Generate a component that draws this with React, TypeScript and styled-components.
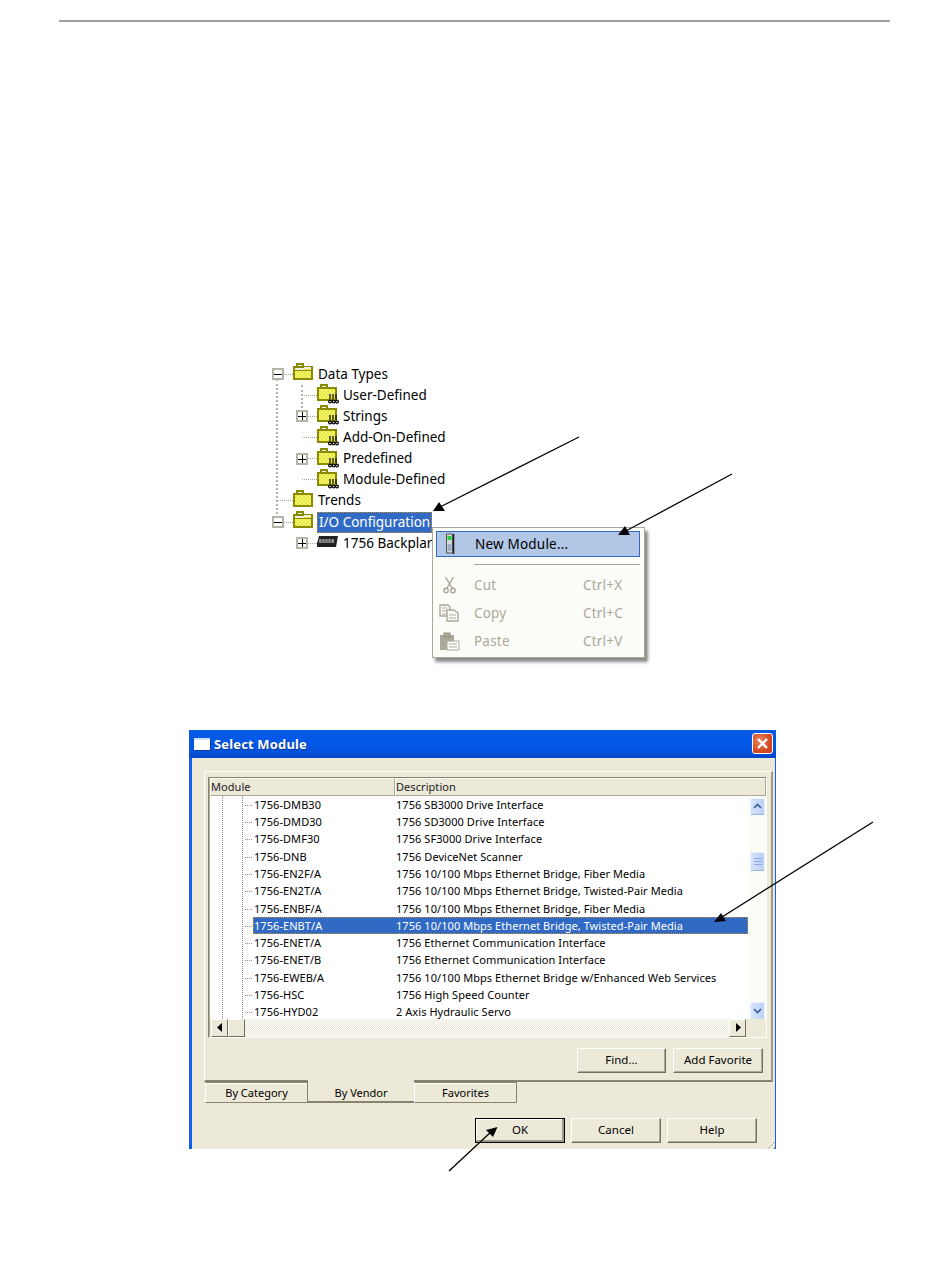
import React from "react";
import styled, { createGlobalStyle } from "styled-components";

const Global = createGlobalStyle`
  html, body { margin: 0; padding: 0; background: #fff; }
  #root { width: 950px; height: 1267px; }
`;

const FONT = `"Noto Sans", "DejaVu Sans", sans-serif`;
const FACE = "#ece9d8";
const dither = `repeating-conic-gradient(#ece9d8 0 25%, #fff 0 50%) 0 0 / 2px 2px`;

const Page = styled.div`
  position: relative;
  width: 950px;
  height: 1267px;
  padding-top: 20px;
  box-sizing: border-box;
  overflow: hidden;
  font-family: ${FONT};
  color: #000;
`;
const Rule = styled.div`
  width: 831px;
  height: 2px;
  margin-left: 59px;
  background: #a0a0a0;
`;

/* ---------- tree ---------- */
const Tree = styled.div`
  position: relative;
  width: 400px;
  margin: 341.5px 0 0 272px;
  font-size: 13.5px;
`;
const Branch = styled.div<{ $left: number; $top: number; $bottom: number }>`
  position: relative;
  &::before {
    content: "";
    position: absolute;
    left: ${(p) => p.$left}px;
    top: ${(p) => p.$top}px;
    bottom: ${(p) => p.$bottom}px;
    border-left: 2px dotted #b4b4aa;
  }
`;
const Row = styled.div<{ $level: number }>`
  position: relative;
  display: flex;
  align-items: center;
  height: 21.15px;
  padding-left: ${(p) => p.$level * 24}px;
`;
const Slot = styled.span`
  flex: none;
  width: 21px;
  height: 21px;
  display: flex;
  align-items: center;
  background: repeating-linear-gradient(90deg, #a4a49a 0 1px, transparent 1px 2px) 6px 50% / 15px 1px no-repeat;
`;
const Expander = styled.span`
  box-sizing: border-box;
  width: 12px;
  height: 12px;
  border: 2px solid #b4b4a6;
  background: #fff;
  display: flex;
  align-items: center;
  justify-content: center;
  position: relative;
  z-index: 1;
  svg { display: block; }
`;
const IconSlot = styled.span<{ $w: number }>`
  flex: none;
  width: ${(p) => p.$w}px;
  display: flex;
  align-items: center;
  svg { display: block; margin-top: -2px; }
`;
const Label = styled.span<{ $selected?: boolean }>`
  white-space: nowrap;
  line-height: 21px;
  ${(p) =>
    p.$selected
      ? `background:#316ac5;color:#fff;outline:1px dotted #c98a2c;outline-offset:-1px;padding:0 2px;margin-left:-1px;`
      : ""}
`;

/* ---------- context menu ---------- */
const Menu = styled.div`
  position: absolute;
  z-index: 3;
  left: 160px;
  top: 163.5px;
  width: 213px;
  height: 131px;
  box-sizing: border-box;
  padding: 3px 4px 0 3px;
  background: #fcfcf9;
  border: 1px solid #aca899;
  box-shadow: 3px 4px 3px #8a8a8a;
  font-size: 13.5px;
  letter-spacing: 0.2px;
`;
const MenuItem = styled.div<{ $active?: boolean }>`
  display: grid;
  grid-template-columns: 38px 109px 1fr;
  align-items: center;
  height: ${(p) => (p.$active ? 26 : 28)}px;
  box-sizing: border-box;
  color: ${(p) => (p.$active ? "#000" : "#aca899")};
  background: ${(p) => (p.$active ? "#b2c6e6" : "transparent")};
  border: ${(p) => (p.$active ? "1px solid #316ac5" : "0")};
  svg { display: block; margin-left: 3px; }
`;
const MenuSep = styled.div`
  height: 1px;
  margin: 7px 0 6px 38px;
  background: #aca899;
`;

/* ---------- dialog ---------- */
const Dialog = styled.div`
  width: 587px;
  height: 419px;
  margin: 176.15px 0 0 189px;
  box-sizing: border-box;
  display: flex;
  flex-direction: column;
  background: ${FACE};
  border-left: 3px solid #0f5ff0;
  border-right: 1px solid #0f5ff0;
`;
const TitleBar = styled.div`
  height: 28px;
  margin: 0 -1px 0 -3px;
  flex: none;
  display: flex;
  align-items: center;
  padding: 0 3px 0 5px;
  gap: 4px;
  background: linear-gradient(#0a5ce6 0%, #0358e8 30%, #0255e2 70%, #0346c8 100%);
`;
const WinGlyph = styled.span`
  width: 16px;
  height: 12px;
  box-sizing: border-box;
  background: #fff;
  border-top: 2px solid #cfe0fa;
  box-shadow: 1px 1px 0 #0a3a9a;
`;
const Title = styled.span`
  flex: 1;
  color: #fff;
  font-size: 13px;
  font-weight: 700;
  letter-spacing: 0.15px;
  text-shadow: 1px 1px 0 #0a3a9a;
`;
const CloseBtn = styled.span`
  width: 21px;
  height: 21px;
  box-sizing: border-box;
  border: 1px solid #fff;
  border-radius: 3px;
  background: radial-gradient(circle at 35% 35%, #e8845f, #d0421c 70%);
  display: flex;
  align-items: center;
  justify-content: center;
`;
const TabPanel = styled.div`
  margin: 13px 2px 0 12px;
  height: 311px;
  flex: none;
  box-sizing: border-box;
  border-top: 1px solid #fff;
  border-left: 1px solid #fff;
  border-right: 2px solid #9d9a89;
  border-bottom: 2px solid #86836f;
  padding: 5px 4px 0 3px;
`;
const ListFrame = styled.div`
  height: 261px;
  box-sizing: border-box;
  border-top: 1px solid #86836f;
  border-left: 1px solid #86836f;
  border-right: 1px solid #fff;
  border-bottom: 1px solid #fff;
  box-shadow: inset 1px 1px 0 #aca899;
  display: flex;
  flex-direction: column;
  font-size: 11px;
  letter-spacing: 0.06px;
`;
const HeaderRow = styled.div`
  display: grid;
  grid-template-columns: 185px 371px;
  height: 18px;
  flex: none;
  margin-left: 1px;
`;
const HeaderCell = styled.div`
  box-sizing: border-box;
  line-height: 16px;
  border: 1px solid;
  border-color: #fff #aca899 #aca899 #fff;
  color: #222;
`;
const ListMiddle = styled.div`
  flex: 1;
  min-height: 0;
  display: flex;
  margin-left: 1px;
`;
const Rows = styled(Branch)`
  flex: 1;
  background: #fff;
  overflow: hidden;
  &::before {
    border-left-width: 1px;
    border-left-color: #8a8a80;
  }
  &::after {
    content: "";
    position: absolute;
    left: 12px;
    top: 0;
    bottom: 0;
    border-left: 1px dotted #8a8a80;
  }
`;
const ModRow = styled.div<{ $selected?: boolean }>`
  display: grid;
  grid-template-columns: 142px 1fr;
  height: 17.27px;
  line-height: 17px;
  margin-left: 43px;
  white-space: nowrap;
  padding-left: 1px;
  position: relative;
  background: ${(p) => (p.$selected ? "#316ac5" : "transparent")};
  color: ${(p) => (p.$selected ? "#fff" : "#000")};
  outline: ${(p) => (p.$selected ? "1px dotted #c98a2c" : "none")};
  outline-offset: -1px;
  &::before {
    content: "";
    position: absolute;
    left: -8px;
    width: 7px;
    top: 9px;
    border-top: 1px dotted #8a8a80;
  }
`;
const VScroll = styled.div`
  flex: none;
  width: 18px;
  padding-top: 2px;
  box-sizing: border-box;
  display: flex;
  flex-direction: column;
  background: #fbfbf7;
`;
const ScrollBtn = styled.div<{ $h: number }>`
  width: 15px;
  height: ${(p) => p.$h}px;
  margin-left: 2px;
  flex: none;
  box-sizing: border-box;
  border-radius: 2px;
  background: linear-gradient(90deg, #d6e3fb, #bcd0f6);
  border: 1px solid #eef3fe;
  border-bottom: 1px solid #9bb4e6;
  display: flex;
  align-items: center;
  justify-content: center;
  svg { display: block; }
`;
const VSpacer = styled.div<{ $h: number }>`
  height: ${(p) => p.$h}px;
  flex: none;
`;
const HScroll = styled.div`
  flex: none;
  height: 18px;
  margin-left: 2px;
  display: flex;
  background: ${FACE};
`;
const HButton = styled.div`
  width: 17px;
  height: 18px;
  flex: none;
  box-sizing: border-box;
  border: 1px solid;
  border-color: #fff #716f64 #716f64 #fff;
  background: ${FACE};
  display: flex;
  align-items: center;
  justify-content: center;
  svg { display: block; }
`;
const HTrack = styled.div`
  flex: 1;
  background: ${dither};
`;
const HCorner = styled.div`
  width: 20px;
  flex: none;
`;
const PanelButtons = styled.div`
  display: flex;
  justify-content: flex-end;
  gap: 7px;
  padding: 10px 4px 0 0;
`;
const Btn = styled.div<{ $w: number; $default?: boolean }>`
  width: ${(p) => p.$w}px;
  height: 25px;
  padding-bottom: 2px;
  box-sizing: border-box;
  display: flex;
  align-items: center;
  justify-content: center;
  font-size: 11.5px;
  border: 1px solid;
  border-color: ${(p) => (p.$default ? "#000" : "#fff #716f64 #716f64 #fff")};
  box-shadow: ${(p) => (p.$default ? "inset -2px -2px 0 #9d9a89, inset 1px 1px 0 #fff" : "inset -1px -1px 0 #aca899")};
  background: ${FACE};
`;
const TabStrip = styled.div`
  display: flex;
  height: 22px;
  flex: none;
  margin-left: 13px;
  font-size: 11px;
`;
const Tab = styled.div<{ $w: number; $active?: boolean }>`
  width: ${(p) => p.$w}px;
  height: ${(p) => (p.$active ? 23 : 21)}px;
  box-sizing: border-box;
  display: flex;
  align-items: center;
  justify-content: center;
  padding-top: ${(p) => (p.$active ? 3 : 0)}px;
  ${(p) =>
    p.$active
      ? "margin-top:-2px; padding-top:5px; border-bottom:2px solid #86836f; background:#ece9d8;"
      : "border-top:1px solid #86836f; border-left:1px solid #fff; border-right:1px solid #86836f; border-bottom:1px solid #86836f; box-shadow: inset 0 1px 0 #fff;"}
`;
const Footer = styled.div`
  display: flex;
  align-items: flex-start;
  justify-content: flex-end;
  gap: 6px;
  padding: 14px 18px 0 0;
  flex: 1;
  position: relative;
`;
const Grip = styled.span`
  position: absolute;
  right: 0;
  bottom: 0;
  width: 11px;
  height: 11px;
  background: repeating-linear-gradient(135deg, transparent 0 2px, #aca899 2px 3px, #fff 3px 4px);
  clip-path: polygon(100% 0, 100% 100%, 0 100%);
`;
const Arrows = styled.svg`
  position: absolute;
  z-index: 5;
  left: 0;
  top: 0;
  pointer-events: none;
`;

/* ---------- drawings ---------- */
const PlusMinus = ({ plus }: { plus?: boolean }) => (
  <Expander>
    <svg width="8" height="8" viewBox="0 0 8 8" shapeRendering="crispEdges">
      <path d="M0 4h8" stroke="#000" strokeWidth="1" />
      {plus && <path d="M4 0v8" stroke="#000" strokeWidth="1" />}
    </svg>
  </Expander>
);

const Dither = ({ id }: { id: string }) => (
  <pattern id={id} x="0" y="0" width="4" height="4" patternUnits="userSpaceOnUse">
    <rect width="4" height="4" fill="#ffff20" />
    <rect width="2" height="2" fill="#dcdc90" />
    <rect x="2" y="2" width="2" height="2" fill="#dcdc90" />
  </pattern>
);

const Folder = ({ id, open, tag }: { id: string; open?: boolean; tag?: boolean }) => (
  <svg width="22" height="20" viewBox="0 0 22 20" shapeRendering="crispEdges">
    <defs>
      <Dither id={id} />
    </defs>
    <path d="M4 3V1H10V3" fill="none" stroke="#8a8a00" strokeWidth="2" />
    <rect x="1" y="3.5" width="18" height="12" fill={`url(#${id})`} stroke="#8a8a00" strokeWidth="2" />
    {open && <path d="M2 5.5H11L18 5" stroke="#f2efd8" strokeWidth="2" />}
    {open && <path d="M2 7.5H19" stroke="#8a8a00" strokeWidth="1" />}
    {tag && (
      <g stroke="#000" strokeWidth="1.2" fill="none" shapeRendering="auto">
        <path d="M13 10v5M16 10v5M19 10v5" />
        <circle cx="13" cy="17.5" r="1.4" />
        <circle cx="16.5" cy="17.5" r="1.4" />
        <circle cx="20" cy="17.5" r="1.4" />
      </g>
    )}
  </svg>
);

const Backplane = () => (
  <svg width="23" height="16" viewBox="1 1 23 16">
    <path d="M3 3H22L20 14H0Z" fill="#222" />
    <rect x="3" y="6" width="15" height="4" fill="#8e8e8e" />
    <path d="M6 6v4M9 6v4M12 6v4M15 6v4" stroke="#444" />
  </svg>
);

const ModuleIcon = () => (
  <svg width="21" height="22" viewBox="-4.5 0 21 22">
    <path d="M2 1H8V20H2Z" fill="#d8d8d8" stroke="#555" />
    <path d="M9 1V21" stroke="#222" strokeWidth="1.6" />
    <rect x="3" y="3" width="4" height="4" fill="#20d040" />
    <rect x="3" y="11" width="4" height="7" fill="#9ab0c8" />
  </svg>
);
const CutIcon = () => (
  <svg width="21" height="18" viewBox="-3.5 0 21 18" fill="none" stroke="#aca899" strokeWidth="1.4">
    <path d="M3 1L9.5 12M11 1L4.5 12" />
    <circle cx="3.5" cy="14.5" r="2.2" />
    <circle cx="10.5" cy="14.5" r="2.2" />
  </svg>
);
const CopyIcon = () => (
  <svg width="21" height="18" viewBox="0 0 21 18" fill="#fcfcf9" stroke="#aca899" strokeWidth="1.4">
    <path d="M1 1H9L11 3V12H1Z" />
    <path d="M3 4H8M3 7H8M3 10H8" strokeWidth="1" />
    <path d="M8 6H15L19 9V17H8Z" />
    <path d="M10 11H17M10 14H17" strokeWidth="1" />
  </svg>
);
const PasteIcon = () => (
  <svg width="21" height="19" viewBox="0 0 21 19">
    <path d="M1 3H15V18H1Z" fill="#aca899" />
    <rect x="5" y="1" width="6" height="4" fill="#aca899" stroke="#8f8c7c" />
    <path d="M8 9H20V18H8Z" fill="#fcfcf9" stroke="#aca899" />
    <path d="M10 12H18M10 15H18" stroke="#aca899" />
  </svg>
);
const Chevron = ({ up }: { up?: boolean }) => (
  <svg width="9" height="6" viewBox="0 0 9 6" fill="none" stroke="#3a5a9a" strokeWidth="1.6">
    <path d={up ? "M1 5L4.5 1.5L8 5" : "M1 1L4.5 4.5L8 1"} />
  </svg>
);
const ThumbLines = () => (
  <svg width="8" height="7" viewBox="0 0 8 7" stroke="#8fa8e0">
    <path d="M0 .5H8M0 3.5H8M0 6.5H8" />
  </svg>
);

const Head = ({ d }: { d: string }) => <path d={d} fill="#000" />;

const modules: [string, string][] = [
  ["1756-DMB30", "1756 SB3000 Drive Interface"],
  ["1756-DMD30", "1756 SD3000 Drive Interface"],
  ["1756-DMF30", "1756 SF3000 Drive Interface"],
  ["1756-DNB", "1756 DeviceNet Scanner"],
  ["1756-EN2F/A", "1756 10/100 Mbps Ethernet Bridge, Fiber Media"],
  ["1756-EN2T/A", "1756 10/100 Mbps Ethernet Bridge, Twisted-Pair Media"],
  ["1756-ENBF/A", "1756 10/100 Mbps Ethernet Bridge, Fiber Media"],
  ["1756-ENBT/A", "1756 10/100 Mbps Ethernet Bridge, Twisted-Pair Media"],
  ["1756-ENET/A", "1756 Ethernet Communication Interface"],
  ["1756-ENET/B", "1756 Ethernet Communication Interface"],
  ["1756-EWEB/A", "1756 10/100 Mbps Ethernet Bridge w/Enhanced Web Services"],
  ["1756-HSC", "1756 High Speed Counter"],
  ["1756-HYD02", "2 Axis Hydraulic Servo"],
];

const App = () => (
  <Page>
    <Global />
    <Rule />
    <Tree>
      <Branch $left={4} $top={15} $bottom={36}>
        <Row $level={0}>
          <Slot><PlusMinus /></Slot>
          <IconSlot $w={25}><Folder id="f0" open /></IconSlot>
          <Label>Data Types</Label>
        </Row>
        <Branch $left={29} $top={0} $bottom={74}>
          <Row $level={1}>
            <Slot />
            <IconSlot $w={26}><Folder id="f1" tag /></IconSlot>
            <Label>User-Defined</Label>
          </Row>
          <Row $level={1}>
            <Slot><PlusMinus plus /></Slot>
            <IconSlot $w={26}><Folder id="f2" tag /></IconSlot>
            <Label>Strings</Label>
          </Row>
          <Row $level={1}>
            <Slot />
            <IconSlot $w={26}><Folder id="f3" tag /></IconSlot>
            <Label>Add-On-Defined</Label>
          </Row>
          <Row $level={1}>
            <Slot><PlusMinus plus /></Slot>
            <IconSlot $w={26}><Folder id="f4" tag /></IconSlot>
            <Label>Predefined</Label>
          </Row>
          <Row $level={1}>
            <Slot />
            <IconSlot $w={26}><Folder id="f5" tag /></IconSlot>
            <Label>Module-Defined</Label>
          </Row>
        </Branch>
        <Row $level={0}>
          <Slot />
          <IconSlot $w={25}><Folder id="f6" /></IconSlot>
          <Label>Trends</Label>
        </Row>
        <Row $level={0}>
          <Slot><PlusMinus /></Slot>
          <IconSlot $w={25}><Folder id="f7" open /></IconSlot>
          <Label $selected>I/O Configuration</Label>
        </Row>
        <Row $level={1}>
          <Slot><PlusMinus plus /></Slot>
          <IconSlot $w={26}><Backplane /></IconSlot>
          <Label>1756 Backplane</Label>
        </Row>
      </Branch>
      <Menu>
        <MenuItem $active>
          <ModuleIcon />
          <span>New Module...</span>
        </MenuItem>
        <MenuSep />
        <MenuItem>
          <CutIcon />
          <span>Cut</span>
          <span>Ctrl+X</span>
        </MenuItem>
        <MenuItem>
          <CopyIcon />
          <span>Copy</span>
          <span>Ctrl+C</span>
        </MenuItem>
        <MenuItem>
          <PasteIcon />
          <span>Paste</span>
          <span>Ctrl+V</span>
        </MenuItem>
      </Menu>
    </Tree>

    <Dialog>
      <TitleBar>
        <WinGlyph />
        <Title>Select Module</Title>
        <CloseBtn>
          <svg width="13" height="13" viewBox="0 0 13 13" stroke="#fff" strokeWidth="2.4">
            <path d="M2 2L11 11M11 2L2 11" />
          </svg>
        </CloseBtn>
      </TitleBar>
      <TabPanel>
        <ListFrame>
          <HeaderRow>
            <HeaderCell>Module</HeaderCell>
            <HeaderCell>Description</HeaderCell>
          </HeaderRow>
          <ListMiddle>
            <Rows $left={32} $top={0} $bottom={0}>
              {modules.map(([m, d]) => (
                <ModRow key={m} $selected={m === "1756-ENBT/A"}>
                  <span>{m}</span>
                  <span>{d}</span>
                </ModRow>
              ))}
            </Rows>
            <VScroll>
              <ScrollBtn $h={17}><Chevron up /></ScrollBtn>
              <VSpacer $h={37} />
              <ScrollBtn $h={19}><ThumbLines /></ScrollBtn>
              <VSpacer $h={131} />
              <ScrollBtn $h={18}><Chevron /></ScrollBtn>
            </VScroll>
          </ListMiddle>
          <HScroll>
            <HButton>
              <svg width="6" height="9" viewBox="0 0 6 9"><path d="M5 0V9L0 4.5Z" /></svg>
            </HButton>
            <HButton />
            <HTrack />
            <HButton>
              <svg width="6" height="9" viewBox="0 0 6 9"><path d="M1 0V9L6 4.5Z" /></svg>
            </HButton>
            <HCorner />
          </HScroll>
        </ListFrame>
        <PanelButtons>
          <Btn $w={89}>Find...</Btn>
          <Btn $w={90}>Add Favorite</Btn>
        </PanelButtons>
      </TabPanel>
      <TabStrip>
        <Tab $w={103}>By Category</Tab>
        <Tab $w={106} $active>By Vendor</Tab>
        <Tab $w={103}>Favorites</Tab>
      </TabStrip>
      <Footer>
        <Btn $w={90} $default>OK</Btn>
        <Btn $w={90}>Cancel</Btn>
        <Btn $w={90}>Help</Btn>
        <Grip />
      </Footer>
    </Dialog>

    <Arrows width="950" height="1267" viewBox="0 0 950 1267" fill="none">
      <g stroke="#000" strokeWidth="1.3">
        <path d="M579 437L438 508" />
        <path d="M732 474L624 532" />
        <path d="M873 822L722 917" />
        <path d="M449 1171L492 1131" />
      </g>
      <Head d="M433 511L439 502L445 511Z" />
      <Head d="M618 535L625 526L630 535Z" />
      <Head d="M714 922L721 913L726 921Z" />
      <Head d="M497.5 1127L486 1130L493 1137Z" />
    </Arrows>
  </Page>
);

export default App;
